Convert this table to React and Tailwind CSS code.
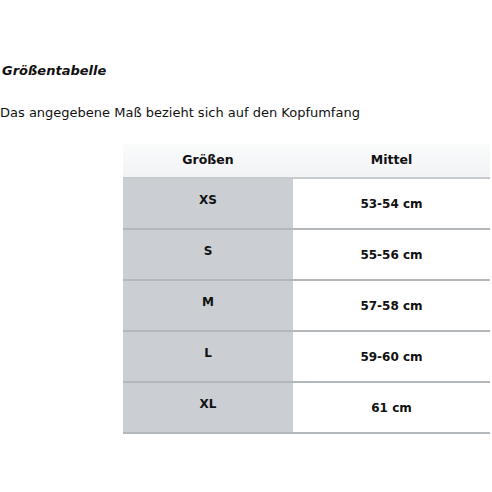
import React from "react";

const rows = [
  { size: "XS", value: "53-54 cm" },
  { size: "S", value: "55-56 cm" },
  { size: "M", value: "57-58 cm" },
  { size: "L", value: "59-60 cm" },
  { size: "XL", value: "61 cm" },
];

const App = () => {
  return (
    <div className="w-[492px] h-[492px] bg-white text-[#111] font-['DejaVu_Sans',sans-serif] overflow-hidden">
      <div className="pt-[63px] pl-[2px]">
        <h2 className="text-[13px] leading-[16px] font-bold italic">Größentabelle</h2>
      </div>
      <p className="pt-[25px] text-[13px] leading-[17px]">
        Das angegebene Maß bezieht sich auf den Kopfumfang
      </p>

      <div className="pt-[23px] pl-[123px] pr-[2px]">
        <div className="flex h-[35px] bg-gradient-to-b from-[#fafbfb] to-[#f2f3f5] border-b-2 border-[#c6cacf] text-[12.5px] font-bold">
          <div className="w-[170px] flex items-center justify-center">Größen</div>
          <div className="flex-1 flex items-center justify-center">Mittel</div>
        </div>
        {rows.map((row) => (
          <div key={row.size} className="flex h-[51px] border-b-2 border-[#b3b8bd] text-[12px] font-bold">
            <div className="w-[170px] bg-[#cbced2] flex items-center justify-center pb-[7px]">
              {row.size}
            </div>
            <div className="flex-1 flex items-center justify-center">{row.value}</div>
          </div>
        ))}
      </div>
    </div>
  );
};

export default App;
